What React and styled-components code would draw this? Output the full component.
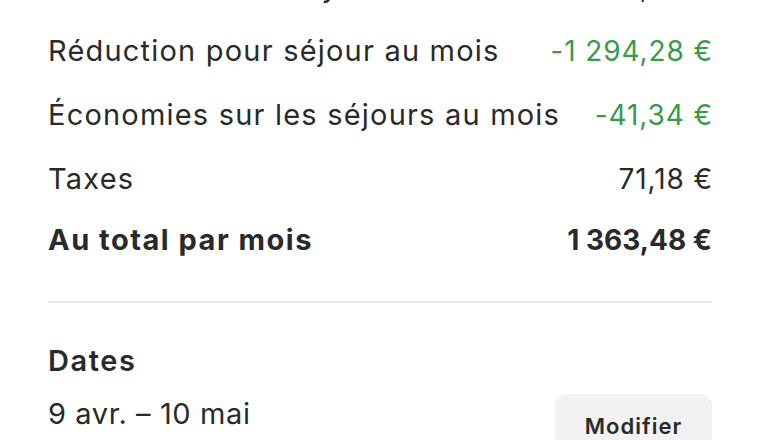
import React from 'react';
import styled, { createGlobalStyle } from 'styled-components';

const GlobalStyle = createGlobalStyle`
  html, body {
    margin: 0;
    padding: 0;
    background: #ffffff;
    overflow: hidden;
  }
  body {
    font-family: Inter, "Noto Sans", "Liberation Sans", sans-serif;
    color: #222222;
    -webkit-font-smoothing: antialiased;
  }
`;

const lines = [
  { label: 'Prix mensuel du loyer', amount: '2 627,92 €' },
  { label: 'Réduction pour séjour au mois', amount: '-1 294,28 €', discount: true },
  { label: 'Économies sur les séjours au mois', amount: '-41,34 €', discount: true },
  { label: 'Taxes', amount: '71,18 €' },
];

const App = () => {
  return (
    <>
      <GlobalStyle />
      <Sheet>
        <PriceList>
          {lines.map((line) => (
            <PriceRow key={line.label}>
              <Label>{line.label}</Label>
              <Amount discount={line.discount}>{line.amount}</Amount>
            </PriceRow>
          ))}
          <TotalRow>
            <Label bold>Au total par mois</Label>
            <Amount bold>1 363,48 €</Amount>
          </TotalRow>
        </PriceList>

        <Divider />

        <TripSection>
          <TripInfo>
            <SectionTitle>Dates</SectionTitle>
            <SectionValue>9 avr. – 10 mai</SectionValue>
          </TripInfo>
          <EditButton type="button">Modifier</EditButton>
        </TripSection>
      </Sheet>
    </>
  );
};

const Sheet = styled.div`
  width: 760px;
  height: 440px;
  box-sizing: border-box;
  padding: 0 48px;
  overflow: hidden;
`;

const PriceList = styled.div`
  display: flex;
  flex-direction: column;
  gap: 28px;
  margin-top: -31px;
`;

const PriceRow = styled.div`
  display: flex;
  justify-content: space-between;
  align-items: center;
  height: 36px;
`;

const TotalRow = styled(PriceRow)`
  margin-top: -3px;
`;

const Label = styled.span`
  font-size: 29px;
  line-height: 36px;
  font-weight: ${props => (props.bold ? 700 : 400)};
  letter-spacing: ${props => (props.bold ? '1.5px' : '1.2px')};
  color: #2a2a2a;
  white-space: nowrap;
`;

const Amount = styled.span`
  font-size: 28px;
  line-height: 36px;
  font-weight: ${props => (props.bold ? 700 : 400)};
  letter-spacing: ${props => (props.bold ? '0' : '0.9px')};
  margin-right: ${props => (props.bold ? '0' : '-1px')};
  color: ${props => (props.discount ? '#3a9a4a' : '#2a2a2a')};
  white-space: nowrap;
`;

const Divider = styled.hr`
  margin: 43px 0 0;
  border: none;
  border-top: 2px solid #ebebeb;
`;

const TripSection = styled.div`
  display: flex;
  justify-content: space-between;
  align-items: flex-start;
  padding-top: 40px;
`;

const TripInfo = styled.div`
  display: flex;
  flex-direction: column;
  gap: 17px;
`;

const SectionTitle = styled.div`
  font-size: 29px;
  line-height: 36px;
  font-weight: 600;
  letter-spacing: 1.6px;
  color: #2a2a2a;
`;

const SectionValue = styled.div`
  font-size: 29px;
  line-height: 36px;
  font-weight: 400;
  letter-spacing: 0.6px;
  color: #2a2a2a;
`;

const EditButton = styled.button`
  margin-top: 51px;
  width: 157px;
  height: 64px;
  border: none;
  border-radius: 12px;
  background: #f2f2f2;
  font-family: Inter, "Noto Sans", "Liberation Sans", sans-serif;
  font-size: 22px;
  font-weight: 600;
  letter-spacing: 1px;
  color: #2a2a2a;
  padding: 0;
  cursor: pointer;
`;

export default App;
